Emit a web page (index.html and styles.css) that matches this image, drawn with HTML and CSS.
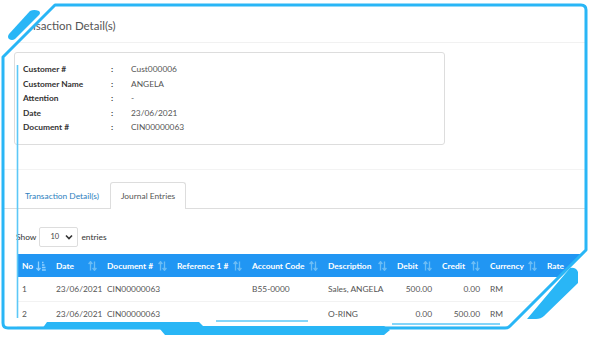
FILE: index.html
```html
<!DOCTYPE html>
<html lang="en">
<head>
  <meta charset="UTF-8" />
  <title>Transaction Detail(s)</title>
  <link rel="stylesheet" href="styles.css">
</head>
<body>
  <div class="page">
    <div class="page-head">
      <h1>Transaction Detail(s)</h1>
    </div>

    <div class="summary">
      <div class="info">
        <div class="label">Customer #</div><div class="colon">:</div><div class="value">Cust000006</div>
        <div class="label">Customer Name</div><div class="colon">:</div><div class="value">ANGELA</div>
        <div class="label">Attention</div><div class="colon">:</div><div class="value">-</div>
        <div class="label">Date</div><div class="colon">:</div><div class="value">23/06/2021</div>
        <div class="label">Document #</div><div class="colon">:</div><div class="value">CIN00000063</div>
      </div>
    </div>

    <div class="tabs">
      <span class="tab">Transaction Detail(s)</span>
      <span class="tab active">Journal Entries</span>
    </div>

    <div class="length">
      Show
      <span class="select">10
        <svg width="8" height="6" viewBox="0 0 8 6"><path d="M1 1.5 L4 4.5 L7 1.5" fill="none" stroke="#333" stroke-width="1.6"/></svg>
      </span>
      entries
    </div>

    <table class="grid">
      <thead>
        <tr>
          <th class="c-no"><div class="th">No
            <svg width="10" height="10" viewBox="0 0 10 10"><path d="M2.5 0.5 V9 M0.5 7 L2.5 9.3 L4.5 7" fill="none" stroke="#8fd0ff" stroke-width="1.3"/><path d="M6 1.5 H7.5 M6 4 H8.5 M6 6.5 H9.5 M6 9 H9.8" stroke="#8fd0ff" stroke-width="1.4"/></svg></div></th>
          <th class="c-date"><div class="th">Date<svg width="9" height="10" viewBox="0 0 9 10"><path d="M2.5 9.5 V0.8 M0.6 3 L2.5 0.6 L4.4 3 M6.5 0.5 V9.2 M4.6 7 L6.5 9.4 L8.4 7" fill="none" stroke="#6cbdf5" stroke-width="1.3"/></svg></div></th>
          <th class="c-doc"><div class="th">Document #<svg width="9" height="10" viewBox="0 0 9 10"><path d="M2.5 9.5 V0.8 M0.6 3 L2.5 0.6 L4.4 3 M6.5 0.5 V9.2 M4.6 7 L6.5 9.4 L8.4 7" fill="none" stroke="#6cbdf5" stroke-width="1.3"/></svg></div></th>
          <th class="c-ref"><div class="th">Reference 1 #<svg width="9" height="10" viewBox="0 0 9 10"><path d="M2.5 9.5 V0.8 M0.6 3 L2.5 0.6 L4.4 3 M6.5 0.5 V9.2 M4.6 7 L6.5 9.4 L8.4 7" fill="none" stroke="#6cbdf5" stroke-width="1.3"/></svg></div></th>
          <th class="c-acc"><div class="th">Account Code<svg width="9" height="10" viewBox="0 0 9 10"><path d="M2.5 9.5 V0.8 M0.6 3 L2.5 0.6 L4.4 3 M6.5 0.5 V9.2 M4.6 7 L6.5 9.4 L8.4 7" fill="none" stroke="#6cbdf5" stroke-width="1.3"/></svg></div></th>
          <th class="c-desc"><div class="th">Description<svg width="9" height="10" viewBox="0 0 9 10"><path d="M2.5 9.5 V0.8 M0.6 3 L2.5 0.6 L4.4 3 M6.5 0.5 V9.2 M4.6 7 L6.5 9.4 L8.4 7" fill="none" stroke="#6cbdf5" stroke-width="1.3"/></svg></div></th>
          <th class="c-debit"><div class="th">Debit<svg width="9" height="10" viewBox="0 0 9 10"><path d="M2.5 9.5 V0.8 M0.6 3 L2.5 0.6 L4.4 3 M6.5 0.5 V9.2 M4.6 7 L6.5 9.4 L8.4 7" fill="none" stroke="#6cbdf5" stroke-width="1.3"/></svg></div></th>
          <th class="c-credit"><div class="th">Credit<svg width="9" height="10" viewBox="0 0 9 10"><path d="M2.5 9.5 V0.8 M0.6 3 L2.5 0.6 L4.4 3 M6.5 0.5 V9.2 M4.6 7 L6.5 9.4 L8.4 7" fill="none" stroke="#6cbdf5" stroke-width="1.3"/></svg></div></th>
          <th class="c-cur"><div class="th">Currency<svg width="9" height="10" viewBox="0 0 9 10"><path d="M2.5 9.5 V0.8 M0.6 3 L2.5 0.6 L4.4 3 M6.5 0.5 V9.2 M4.6 7 L6.5 9.4 L8.4 7" fill="none" stroke="#6cbdf5" stroke-width="1.3"/></svg></div></th>
          <th class="c-rate"><div class="th">Rate</div></th>
        </tr>
      </thead>
      <tbody>
        <tr>
          <td>1</td><td>23/06/2021</td><td>CIN00000063</td><td></td><td>B55-0000</td><td>Sales, ANGELA</td>
          <td class="num">500.00</td><td class="num">0.00</td><td>RM</td><td></td>
        </tr>
        <tr>
          <td>2</td><td>23/06/2021</td><td>CIN00000063</td><td></td><td></td><td>O-RING</td>
          <td class="num">0.00</td><td class="num">500.00</td><td>RM</td><td></td>
        </tr>
      </tbody>
    </table>
  </div>

  <!-- decorative frame laid over the screenshot -->
  <svg class="frame" width="600" height="340" viewBox="0 0 600 340">
    <path fill="#fff" fill-rule="evenodd"
      d="M0 0 H600 V340 H0 Z
         M55 5 H581 Q586 5 586 10 V250 L510 326 Q508 328 505 328 H8 Q3 328 3 323 V57 Z"/>
    <path fill="none" stroke="#29b6f6" stroke-width="3" stroke-linejoin="round"
      d="M55 5 H581 Q586 5 586 10 V250 L510 326 Q508 328 505 328 H8 Q3 328 3 323 V57 Z"/>
    <path fill="#29b6f6" d="M42 329 L47 322 H199 L203 326 H384 L390 330 L384 335 H165 L160 329 Z"/>
    <path fill="#29b6f6" d="M30 11 Q34 9 39 11 Q41 13 39 15 L15 39 Q12 41 9 39 Q7 37 9 34 Z"/>
    <path fill="#29b6f6" d="M570 268 Q576 267 578 272 V283 L544 316 Q541 319 536 319 H527 Z"/>
    <path stroke="#5cc8f7" stroke-width="1.6" d="M17.5 65 V318"/>
    <path stroke="#5cc8f7" stroke-width="1.4" d="M216 321 H308 M392 324 H500"/>
  </svg>
</body>
</html>
```

FILE: styles.css
```css
body {
  margin: 0;
  width: 600px;
  height: 340px;
  overflow: hidden;
  background: #fff;
  font-family: 'Lato', sans-serif;
  color: #555;
  position: relative;
}

.page {
  width: 600px;
}

.page-head {
  height: 42px;
  border-bottom: 1px solid #f1f1f1;
  display: flex;
  align-items: center;
  padding-left: 14px;
}

.page-head h1 {
  margin: 0;
  font-size: 11.5px;
  font-weight: 400;
  color: #555;
  padding-top: 8px;
}

.summary {
  padding: 9px 0 24px 14px;
  border-bottom: 1px solid #f3f3f3;
}

.info {
  width: 421px;
  height: 74px;
  border: 1px solid #ddd;
  border-radius: 3px;
  padding: 9px 0 8px 8px;
  display: grid;
  grid-template-columns: 88px 20px auto;
  grid-auto-rows: 14.5px;
  align-items: center;
  font-size: 8.4px;
}

.info .label,
.info .colon {
  font-weight: 700;
  color: #333;
}

.tabs {
  display: flex;
  margin: 12px 0 0;
  padding-left: 14px;
  border-bottom: 1px solid #ddd;
  height: 26px;
  align-items: flex-end;
}

.tab {
  font-size: 8.4px;
  height: 26px;
  line-height: 26px;
  padding: 0 10px;
  color: #2e7fc0;
  border: 1px solid transparent;
  border-bottom: none;
  border-radius: 3px 3px 0 0;
  box-sizing: border-box;
}

.tab.active {
  color: #555;
  border-color: #ddd;
  background: #fff;
  margin-bottom: -1px;
  height: 27px;
}

.length {
  display: flex;
  align-items: center;
  gap: 3px;
  font-size: 8.4px;
  color: #333;
  padding-left: 16px;
  margin-top: 17px;
  height: 21px;
}

.select {
  width: 39px;
  height: 20px;
  box-sizing: border-box;
  border: 1px solid #ddd;
  border-radius: 2px;
  display: flex;
  align-items: center;
  justify-content: space-between;
  padding: 0 4px 0 10px;
  font-size: 7.5px;
  color: #444;
}

.grid {
  margin: 7px 0 0 17px;
  border-collapse: collapse;
  table-layout: fixed;
  width: 600px;
  font-size: 8.4px;
}

.grid th {
  background: #2196f3;
  color: #fff;
  font-weight: 700;
  text-align: left;
  height: 23px;
  padding: 0 5px;
  box-sizing: border-box;
}

.th {
  display: flex;
  align-items: center;
  justify-content: space-between;
  white-space: nowrap;
}

.grid td {
  height: 24px;
  padding: 0 5px;
  color: #555;
  border-bottom: 1px solid #f2f2f2;
  white-space: nowrap;
}

.grid td.num {
  text-align: right;
}

.c-no { width: 34px; }
.c-date { width: 51px; }
.c-doc { width: 70px; }
.c-ref { width: 75px; }
.c-acc { width: 76px; }
.c-desc { width: 69px; }
.c-debit { width: 45px; }
.c-credit { width: 48px; }
.c-cur { width: 57px; }
.c-rate { width: 75px; }

.frame {
  position: absolute;
  left: 0;
  top: 0;
  pointer-events: none;
}
```
